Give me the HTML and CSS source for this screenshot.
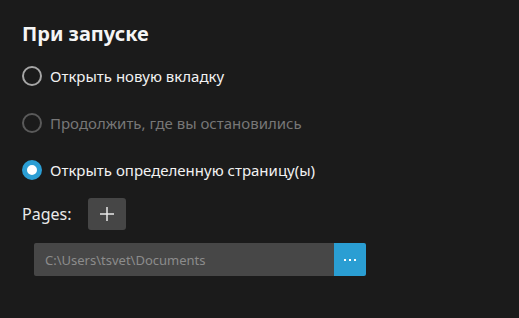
FILE: index.html
```html
<!DOCTYPE html>
<html lang="ru">
<head>
<meta charset="utf-8">
<link rel="stylesheet" href="styles.css">
</head>
<body>
<div class="panel">
  <h1 class="title">При запуске</h1>
  <div class="options">
    <label class="radio">
      <span class="circle"></span>
      <span class="label">Открыть новую вкладку</span>
    </label>
    <label class="radio disabled">
      <span class="circle"></span>
      <span class="label">Продолжить, где вы остановились</span>
    </label>
    <label class="radio checked">
      <span class="circle"></span>
      <span class="label">Открыть определенную страницу(ы)</span>
    </label>
  </div>
  <div class="pages">
    <span class="pages-label">Pages:</span>
    <button class="add-btn" aria-label="Add">
      <svg width="16" height="16" viewBox="0 0 16 16"><path d="M8 1v14M1 8h14" stroke="#e8e8e8" stroke-width="1.5" fill="none"/></svg>
    </button>
  </div>
  <div class="path-row">
    <div class="path-input">C:\Users\tsvet\Documents</div>
    <button class="browse-btn" aria-label="Browse">
      <svg width="12" height="4" viewBox="0 0 12 4"><rect x="0" y="1" width="2" height="2" fill="#fff"/><rect x="5" y="1" width="2" height="2" fill="#fff"/><rect x="10" y="1" width="2" height="2" fill="#fff"/></svg>
    </button>
  </div>
</div>
</body>
</html>
```
FILE: styles.css
```css
html, body {
  margin: 0;
  padding: 0;
  background: #1b1b1b;
  width: 519px;
  height: 318px;
  overflow: hidden;
}
body {
  font-family: "Noto Sans", "Open Sans", sans-serif;
  color: #f2f2f2;
}
.panel {
  padding: 20px 0 0 22px;
  display: flex;
  flex-direction: column;
}
.title {
  margin: 0;
  font-size: 20px;
  font-weight: 700;
  line-height: 27px;
  color: #f5f5f5;
}
.options {
  margin-top: 19px;
  display: flex;
  flex-direction: column;
  gap: 27px;
}
.radio {
  display: flex;
  align-items: center;
  gap: 8px;
  height: 20px;
  font-size: 15px;
}
.circle {
  box-sizing: border-box;
  width: 20px;
  height: 20px;
  border-radius: 50%;
  border: 2px solid #a6a6a6;
  flex: none;
}
.disabled .circle {
  border-color: #5a5a5a;
}
.disabled .label {
  color: #777;
}
.checked .circle {
  border: 5px solid #2b9ed4;
  background: #fff;
}
.pages {
  margin-top: 18px;
  display: flex;
  align-items: center;
  gap: 14px;
}
.pages-label {
  font-size: 16px;
  color: #eaeaea;
  width: 52px;
}
.add-btn {
  width: 38px;
  height: 32px;
  border: none;
  border-radius: 3px;
  background: #464646;
  display: flex;
  align-items: center;
  justify-content: center;
  padding: 0;
}
.path-row {
  margin: 13px 0 0 12px;
  display: flex;
  width: 332px;
  height: 33px;
}
.path-input {
  flex: 1;
  background: #474747;
  border-radius: 2px 0 0 2px;
  color: #8c8c8c;
  font-size: 13px;
  display: flex;
  align-items: center;
  padding-left: 11px;
}
.browse-btn {
  width: 32px;
  border: none;
  padding: 0;
  background: #2a9ed3;
  border-radius: 0 2px 2px 0;
  display: flex;
  align-items: center;
  justify-content: center;
}
```
